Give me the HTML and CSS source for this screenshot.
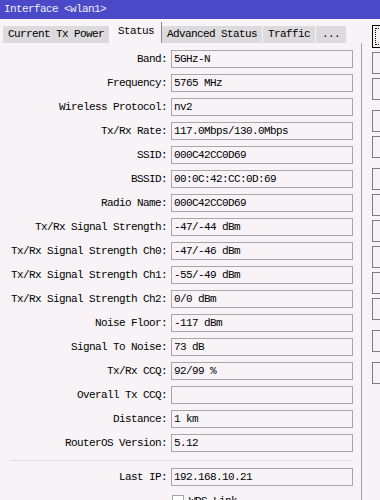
FILE: index.html
```html
<!DOCTYPE html>
<html lang="en">

<head>
  <meta charset="UTF-8">
  <title>Interface &lt;wlan1&gt;</title>
  <link rel="stylesheet" href="styles.css">
</head>

<body>
  <div class="window">
    <div class="titlebar">Interface &lt;wlan1&gt;</div>

    <div class="body">
      <div class="main">
        <div class="tabs">
          <div class="tab">Current Tx Power</div>
          <div class="tab active">Status</div>
          <div class="tab">Advanced Status</div>
          <div class="tab">Traffic</div>
          <div class="tab more">...</div>
        </div>

        <div class="panel">
          <div class="label">Band:</div>
          <div class="field">5GHz-N</div>
          <div class="label">Frequency:</div>
          <div class="field">5765 MHz</div>
          <div class="label">Wireless Protocol:</div>
          <div class="field">nv2</div>
          <div class="label">Tx/Rx Rate:</div>
          <div class="field">117.0Mbps/130.0Mbps</div>
          <div class="label">SSID:</div>
          <div class="field">000C42CC0D69</div>
          <div class="label">BSSID:</div>
          <div class="field">00:0C:42:CC:0D:69</div>
          <div class="label">Radio Name:</div>
          <div class="field">000C42CC0D69</div>
          <div class="label">Tx/Rx Signal Strength:</div>
          <div class="field">-47/-44 dBm</div>
          <div class="label">Tx/Rx Signal Strength Ch0:</div>
          <div class="field">-47/-46 dBm</div>
          <div class="label">Tx/Rx Signal Strength Ch1:</div>
          <div class="field">-55/-49 dBm</div>
          <div class="label">Tx/Rx Signal Strength Ch2:</div>
          <div class="field">0/0 dBm</div>
          <div class="label">Noise Floor:</div>
          <div class="field">-117 dBm</div>
          <div class="label">Signal To Noise:</div>
          <div class="field">73 dB</div>
          <div class="label">Tx/Rx CCQ:</div>
          <div class="field">92/99 %</div>
          <div class="label">Overall Tx CCQ:</div>
          <div class="field"></div>
          <div class="label">Distance:</div>
          <div class="field">1 km</div>
          <div class="label">RouterOS Version:</div>
          <div class="field">5.12</div>

          <div class="sep"></div>

          <div class="label">Last IP:</div>
          <div class="field">192.168.10.21</div>
          <div class="label"></div>
          <div class="check"><span class="box"></span>WDS Link</div>
        </div>
      </div>

      <div class="buttons">
        <div class="btn focus"></div>
        <div class="btn"></div>
        <div class="btn"></div>
        <div class="btn group"></div>
        <div class="btn"></div>
        <div class="btn group"></div>
        <div class="btn"></div>
        <div class="btn"></div>
        <div class="btn"></div>
        <div class="btn"></div>
        <div class="btn"></div>
        <div class="btn group"></div>
        <div class="btn group"></div>
      </div>
    </div>
  </div>
</body>

</html>
```

FILE: styles.css
```css
* {
  margin: 0;
  padding: 0;
  box-sizing: border-box;
}

body {
  width: 380px;
  height: 500px;
  overflow: hidden;
  background: #f7f3f7;
  font-family: "Liberation Mono", "Noto Sans CJK SC", monospace;
  font-size: 11px;
  letter-spacing: -0.6px;
  color: #000;
}

.window {
  width: 380px;
  height: 500px;
}

.titlebar {
  height: 19px;
  line-height: 19px;
  padding-left: 4px;
  background: #4a4ac9;
  color: #eeeefa;
}

.body {
  display: flex;
}

.main {
  width: 362px;
  flex: none;
}

/* --------tabs--------- */
.tabs {
  display: flex;
  align-items: flex-end;
  height: 24px;
  padding-left: 3px;
}

.tab {
  height: 17px;
  line-height: 17px;
  padding: 0 5px;
  background: #dcdadc;
  border-right: 1px solid #f4f2f4;
  white-space: nowrap;
}

.tab.active {
  height: 21px;
  line-height: 19px;
  padding: 0 7px;
  background: #f7f3f7;
  border-left: 1px solid #fff;
  border-right: 1px solid #8a888a;
}

.tab.more {
  padding: 0 6px;
}

/* --------status panel--------- */
.panel {
  height: 457px;
  border-right: 1px solid #a4a2a4;
  display: grid;
  grid-template-columns: 167px 182px;
  column-gap: 4px;
  row-gap: 6px;
  align-content: start;
  padding-top: 7px;
}

.label {
  height: 18px;
  line-height: 18px;
  text-align: right;
  white-space: nowrap;
}

.field {
  height: 18px;
  line-height: 16px;
  padding-left: 2px;
  border: 1px solid #a8a6a8;
  background: #f7f3f7;
  white-space: nowrap;
}

.sep {
  grid-column: 1 / 3;
  height: 1px;
  margin: 2px 0 1px 10px;
  background: #dedcde;
}

.check {
  display: flex;
  align-items: center;
  gap: 5px;
  height: 18px;
  padding-left: 1px;
}

.box {
  width: 12px;
  height: 12px;
  border: 1px solid #a8a6a8;
  background: #fff;
}

/* --------right buttons--------- */
.buttons {
  display: flex;
  flex-direction: column;
  gap: 4px;
  padding-top: 6px;
  padding-left: 10px;
}

.btn {
  width: 40px;
  height: 22px;
  border: 1px solid #7e7c7e;
  background: #f7f3f7;
}

.btn.group {
  margin-top: 6px;
}

.btn.focus {
  height: 23px;
  border: 1px solid #000;
  outline: 1px dotted #000;
  outline-offset: -4px;
}
```
